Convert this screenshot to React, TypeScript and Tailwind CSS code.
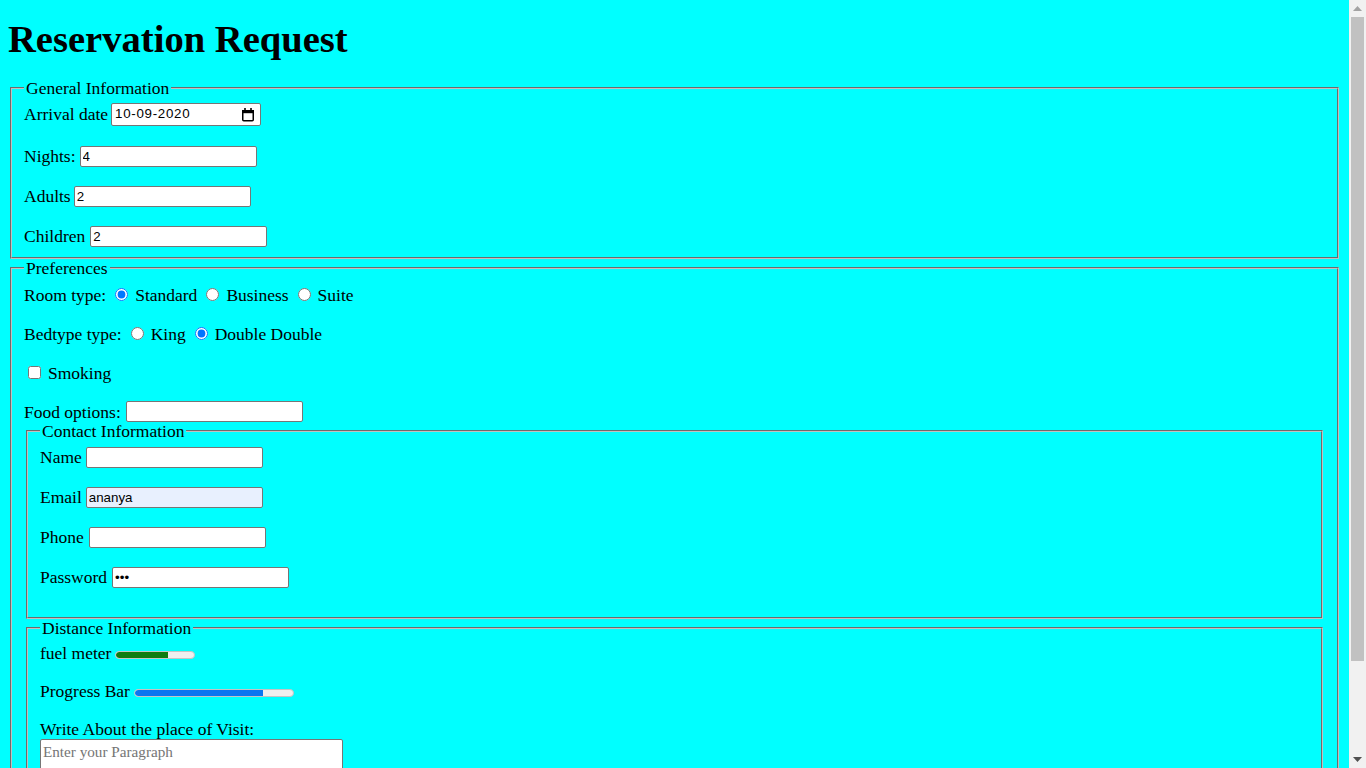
import React from "react";

const base =
  "h-[21px] w-[177px] rounded-[2px] border border-[#767676] px-[2px] text-[13.33px] text-black font-['Liberation_Sans',Arial,sans-serif] outline-none";
const field = `${base} bg-white`;

const Fieldset = ({ legend, children, className = "" }: { legend: string; children: React.ReactNode; className?: string }) => (
  <fieldset className={`mx-[2px] border-2 border-[#c0c0c0] [border-style:groove] px-3 pt-[5.6px] pb-[10px] ${className}`}>
    <legend className="px-[2px] leading-[18px]">{legend}</legend>
    {children}
  </fieldset>
);

const Row = ({ children, className = "" }: { children: React.ReactNode; className?: string }) => (
  <div className={`flex h-[21px] items-center ${className}`}>{children}</div>
);

const CalendarIcon = () => (
  <svg width="14" height="15" viewBox="0 0 14 15" className="shrink-0">
    <rect x="1.75" y="3.75" width="10.5" height="10" rx="1" fill="none" stroke="black" strokeWidth="1.5" />
    <rect x="1" y="3" width="12" height="3.2" fill="black" />
    <rect x="3.2" y="1" width="1.6" height="3" fill="black" />
    <rect x="9.2" y="1" width="1.6" height="3" fill="black" />
  </svg>
);

const Bar = ({ width, fill, color }: { width: number; fill: number; color: string }) => (
  <div
    className="mt-[9px] flex h-[8px] overflow-hidden rounded-full border border-[#c4c4c4] bg-[#efefef]"
    style={{ width }}
  >
    <div className="h-full rounded-l-full" style={{ width: fill, background: color }} />
  </div>
);

const Scrollbar = () => (
  <div className="flex h-screen w-[17px] shrink-0 flex-col bg-[#f1f1f1]">
    <div className="flex h-[17px] items-center justify-center">
      <svg width="9" height="5" viewBox="0 0 9 5">
        <path d="M0 5 L4.5 0 L9 5 Z" fill="#a3a3a3" />
      </svg>
    </div>
    <div className="flex-1 px-[2px]">
      <div className="h-[644px] bg-[#c1c1c1]" />
    </div>
    <div className="flex h-[17px] items-center justify-center">
      <svg width="9" height="5" viewBox="0 0 9 5">
        <path d="M0 0 L9 0 L4.5 5 Z" fill="#505050" />
      </svg>
    </div>
  </div>
);

export default function App() {
  return (
    <div className="flex h-screen overflow-hidden">
      <div className="h-full flex-1 overflow-hidden bg-[#00ffff] p-2 text-[17.5px] text-black font-['Liberation_Serif',serif]">
        <h1 className="mt-[13px] mb-[21px] text-[38.6px] font-bold leading-[37px]">Reservation Request</h1>

        <Fieldset legend="General Information">
          <div className="flex h-[23px] items-center">
            <span>Arrival date</span>
            <div className="ml-[3px] flex h-[23px] w-[150px] items-center justify-between rounded-[2px] border border-[#767676] bg-white pr-[5px] pl-[3px] text-[13.33px] tracking-[0.7px] font-['Liberation_Sans',Arial,sans-serif]">
              <span>10-09-2020</span>
              <CalendarIcon />
            </div>
          </div>
          <Row className="mt-[20px]">
            <span>Nights:</span>
            <input className={`ml-[4px] ${field}`} defaultValue="4" />
          </Row>
          <Row className="mt-[19px]">
            <span>Adults</span>
            <input className={`ml-[3px] ${field}`} defaultValue="2" />
          </Row>
          <Row className="mt-[19px]">
            <span>Children</span>
            <input className={`ml-[5px] ${field}`} defaultValue="2" />
          </Row>
        </Fieldset>

        <Fieldset legend="Preferences">
          <Row className="mt-[2px]">
            <span>Room type:</span>
            <input type="radio" name="room" defaultChecked className="ml-[9px] mr-[7px] h-[13px] w-[13px]" />
            <span>Standard</span>
            <input type="radio" name="room" className="ml-[9px] mr-[7px] h-[13px] w-[13px]" />
            <span>Business</span>
            <input type="radio" name="room" className="ml-[9px] mr-[7px] h-[13px] w-[13px]" />
            <span>Suite</span>
          </Row>
          <Row className="mt-[18px]">
            <span>Bedtype type:</span>
            <input type="radio" name="bed" className="ml-[9px] mr-[7px] h-[13px] w-[13px]" />
            <span>King</span>
            <input type="radio" name="bed" defaultChecked className="ml-[9px] mr-[7px] h-[13px] w-[13px]" />
            <span>Double Double</span>
          </Row>
          <Row className="mt-[18px]">
            <input type="checkbox" className="ml-[4px] mr-[7px] h-[13px] w-[13px]" />
            <span>Smoking</span>
          </Row>
          <Row className="mt-[18px]">
            <span>Food options:</span>
            <input className={`ml-[5px] ${field}`} />
          </Row>

          <Fieldset legend="Contact Information">
            <Row className="mt-[1px]">
              <span>Name</span>
              <input className={`ml-[4px] ${field}`} />
            </Row>
            <Row className="mt-[19px]">
              <span>Email</span>
              <input className={`ml-[4px] ${base} bg-[#e8f0fe]`} defaultValue="ananya" />
            </Row>
            <Row className="mt-[19px]">
              <span>Phone</span>
              <input className={`ml-[5px] ${field}`} />
            </Row>
            <Row className="mt-[19px] mb-[19px]">
              <span>Password</span>
              <input type="password" className={`ml-[5px] ${field}`} defaultValue="abc" />
            </Row>
          </Fieldset>

          <Fieldset legend="Distance Information">
            <Row>
              <span>fuel meter</span>
              <div className="ml-[4px] self-start">
                <Bar width={80} fill={52} color="#107c10" />
              </div>
            </Row>
            <Row className="mt-[17px]">
              <span>Progress Bar</span>
              <div className="ml-[4px] self-start">
                <Bar width={160} fill={128} color="#0b75f0" />
              </div>
            </Row>
            <Row className="mt-[17px]">
              <span>Write About the place of Visit:</span>
            </Row>
            <textarea
              className="mt-[0px] mb-[4px] block h-[101px] w-[303px] resize rounded-[2px] border border-[#767676] bg-white px-[2px] py-[1px] text-[15.2px] placeholder:text-[#757575] outline-none"
              placeholder="Enter your Paragraph"
            />
          </Fieldset>
        </Fieldset>
      </div>
      <Scrollbar />
    </div>
  );
}
